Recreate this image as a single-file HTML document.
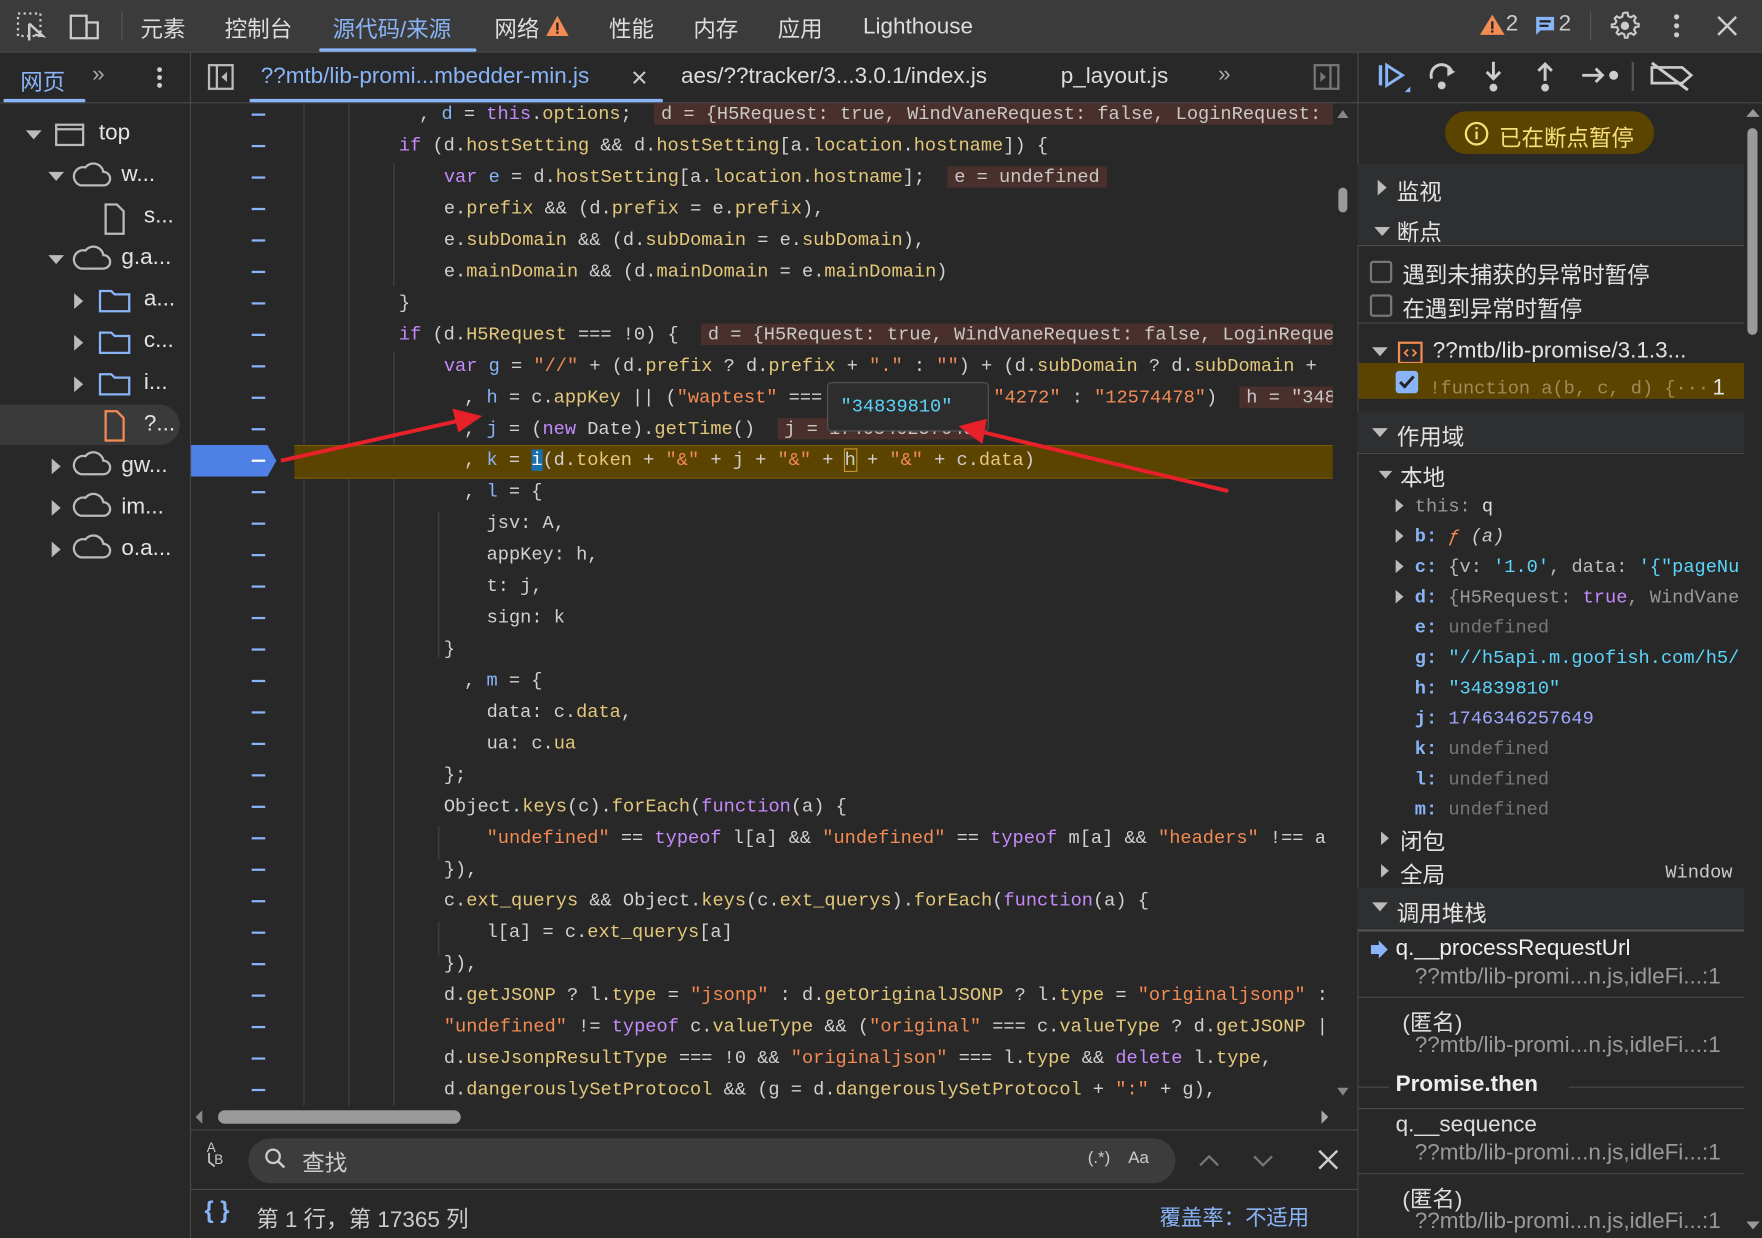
<!DOCTYPE html>
<html><head><meta charset="utf-8">
<style>
html,body{margin:0;padding:0;background:#282828;overflow:hidden;width:1762px;height:1238px}
#w{position:absolute;left:0;top:0;width:1568px;height:1102px;transform:scale(1.12372);transform-origin:0 0;background:#282828;font-family:"Liberation Sans","Noto Sans CJK SC",sans-serif;color:#e3e3e3;overflow:hidden}
.a{position:absolute}
.t{font-size:20px;white-space:nowrap}
.code{position:absolute;font-family:"Liberation Mono","Noto Sans CJK SC",monospace;font-size:16.6px;line-height:28px;white-space:pre;color:#d0d0d0}
.k{color:#c58af9}.p{color:#e3c77a}.s{color:#f28b54}.v{color:#8ab4f8}
.box{background:#4a302c;color:#c8c8c8;padding:0 6px}
.dash{position:absolute;left:224px;width:12px;height:1.5px;background:#8ab4f8}
.guide{position:absolute;width:1px;background:#444}
.hdr{position:absolute;left:1208px;width:344px;height:36px;background:#2e2f31}
.mono{font-family:"Liberation Mono","Noto Sans CJK SC",monospace;font-size:16.6px;white-space:nowrap}
</style></head><body><div id="w">

<!-- top bar -->
<div class="a" style="left:0;top:0;width:1568px;height:46px;background:#3b3b3b;border-bottom:1px solid #4a4a4a"></div>
<svg class="a" style="left:14px;top:10px" width="28" height="28" viewBox="0 0 28 28"><rect x="2" y="2" width="20" height="20" fill="none" stroke="#ccc" stroke-width="2" stroke-dasharray="2 3"/><path d="M12 11 L12 26 M12 11 L24 22 L17 21" stroke="#ccc" stroke-width="2.2" fill="none"/></svg>
<svg class="a" style="left:60px;top:12px" width="32" height="24"><rect x="3" y="2" width="14" height="20" fill="none" stroke="#ccc" stroke-width="2"/><rect x="17" y="8" width="10" height="14" fill="none" stroke="#ccc" stroke-width="2"/></svg>
<div class="a" style="left:108px;top:10px;width:1px;height:26px;background:#555"></div>
<div class="a t" style="left:125px;top:10px;color:#ddd">元素</div>
<div class="a t" style="left:200px;top:10px;color:#ddd">控制台</div>
<div class="a t" style="left:296px;top:10px;color:#8ab4f8">源代码/来源</div>
<div class="a" style="left:284px;top:43px;width:140px;height:3px;background:#8ab4f8;border-radius:2px"></div>
<div class="a t" style="left:440px;top:10px;color:#ddd">网络</div>
<svg class="a" style="left:485px;top:13px" width="22" height="20"><path d="M11 1 L21 19 L1 19Z" fill="#f28b54"/><rect x="10" y="7" width="2" height="7" fill="#222"/><rect x="10" y="15" width="2" height="2" fill="#222"/></svg>
<div class="a t" style="left:542px;top:10px;color:#ddd">性能</div>
<div class="a t" style="left:617px;top:10px;color:#ddd">内存</div>
<div class="a t" style="left:692px;top:10px;color:#ddd">应用</div>
<div class="a t" style="left:768px;top:13px;color:#ddd">Lighthouse</div>
<svg class="a" style="left:1316px;top:12px" width="24" height="20"><path d="M12 1 L23 19 L1 19Z" fill="#f28b54"/><rect x="11" y="7" width="2" height="7" fill="#222"/><rect x="11" y="15" width="2" height="2" fill="#222"/></svg>
<div class="a t" style="left:1340px;top:10px;color:#ccc">2</div>
<svg class="a" style="left:1365px;top:13px" width="20" height="20"><path d="M2 2 H18 V14 H6 L2 18Z" fill="#8ab4f8"/><rect x="5" y="5" width="10" height="2" fill="#222"/><rect x="5" y="9" width="8" height="2" fill="#222"/></svg>
<div class="a t" style="left:1387px;top:10px;color:#ccc">2</div>
<div class="a" style="left:1415px;top:10px;width:1px;height:26px;background:#555"></div>
<svg class="a" style="left:1432px;top:9px" width="28" height="28" viewBox="0 0 24 24"><path d="M12 2 l2 0 .5 2.5 2 1 2.3-1.3 1.5 1.5-1.3 2.3 1 2 2.5.5v2l-2.5.5-1 2 1.3 2.3-1.5 1.5-2.3-1.3-2 1-.5 2.5h-2l-.5-2.5-2-1-2.3 1.3-1.5-1.5 1.3-2.3-1-2L2 13v-2l2.5-.5 1-2L4.2 6.2l1.5-1.5L8 6l2-1 .5-2.5Z" fill="none" stroke="#ccc" stroke-width="1.6"/><circle cx="12" cy="12" r="3.2" fill="#ccc"/></svg>
<svg class="a" style="left:1484px;top:10px" width="16" height="26"><circle cx="8" cy="5" r="2.3" fill="#ccc"/><circle cx="8" cy="13" r="2.3" fill="#ccc"/><circle cx="8" cy="21" r="2.3" fill="#ccc"/></svg>
<svg class="a" style="left:1526px;top:12px" width="22" height="22"><path d="M3 3 L19 19 M19 3 L3 19" stroke="#ccc" stroke-width="2.2"/></svg>

<!-- second row -->
<div class="a" style="left:0;top:47px;width:1568px;height:44px;background:#282828;border-bottom:1px solid #4a4a4a"></div>
<div class="a" style="left:169px;top:47px;width:1px;height:1055px;background:#4a4a4a"></div>
<div class="a" style="left:1208px;top:47px;width:1px;height:1055px;background:#4a4a4a"></div>
<div class="a t" style="left:18px;top:57px;color:#8ab4f8">网页</div>
<div class="a" style="left:3px;top:88px;width:73px;height:3px;background:#8ab4f8;border-radius:2px"></div>
<div class="a t" style="left:82px;top:55px;color:#aaa">&raquo;</div>
<svg class="a" style="left:136px;top:58px" width="12" height="24"><circle cx="6" cy="4" r="2.2" fill="#ccc"/><circle cx="6" cy="11" r="2.2" fill="#ccc"/><circle cx="6" cy="18" r="2.2" fill="#ccc"/></svg>
<svg class="a" style="left:184px;top:56px" width="26" height="26"><rect x="2" y="2" width="21" height="21" fill="none" stroke="#bbb" stroke-width="2"/><path d="M9 2 V23" stroke="#bbb" stroke-width="2"/><path d="M18 8 L13 12.5 L18 17Z" fill="#bbb"/></svg>
<div class="a t" style="left:232px;top:57px;color:#8ab4f8">??mtb/lib-promi...mbedder-min.js</div>
<svg class="a" style="left:562px;top:62px" width="14" height="14"><path d="M2 2 L12 12 M12 2 L2 12" stroke="#ccc" stroke-width="1.8"/></svg>
<div class="a" style="left:222px;top:88px;width:368px;height:3px;background:#8ab4f8;border-radius:2px"></div>
<div class="a t" style="left:606px;top:57px;color:#ddd">aes/??tracker/3...3.0.1/index.js</div>
<div class="a t" style="left:944px;top:57px;color:#ddd">p_layout.js</div>
<div class="a t" style="left:1084px;top:55px;color:#aaa">&raquo;</div>
<svg class="a" style="left:1168px;top:56px" width="26" height="26"><rect x="2" y="2" width="21" height="21" fill="none" stroke="#777" stroke-width="2"/><path d="M16 2 V23" stroke="#777" stroke-width="2"/><path d="M7 8 L12 12.5 L7 17Z" fill="#777"/></svg>
<!-- debugger toolbar -->
<svg class="a" style="left:1222px;top:52px" width="290" height="36">
<rect x="5" y="6" width="3" height="18" fill="#8ab4f8"/><path d="M12 6 L26 15 L12 24Z" fill="none" stroke="#8ab4f8" stroke-width="2.6"/><path d="M28 30 L33 25 L33 30Z" fill="#8ab4f8"/>
<path d="M52 18 A9 9 0 0 1 70 12" fill="none" stroke="#ccc" stroke-width="2.6"/><path d="M66 8 L73 12 L66 16Z" fill="#ccc"/><circle cx="61" cy="24" r="3.5" fill="#ccc"/>
<path d="M107 3 V18 M101 12 L107 18 L113 12" stroke="#ccc" stroke-width="2.6" fill="none"/><circle cx="107" cy="26" r="3.5" fill="#ccc"/>
<path d="M153 20 V5 M147 11 L153 5 L159 11" stroke="#ccc" stroke-width="2.6" fill="none"/><circle cx="153" cy="26" r="3.5" fill="#ccc"/>
<path d="M186 15 H204 M198 9 L204 15 L198 21" stroke="#ccc" stroke-width="2.6" fill="none"/><circle cx="214" cy="15" r="4" fill="#ccc"/>
<rect x="230" y="3" width="2" height="26" fill="#555"/>
<path d="M248 8 H275 L283 15 L275 22 H248Z" fill="none" stroke="#ccc" stroke-width="2.4"/><path d="M248 4 L280 28" stroke="#ccc" stroke-width="2.6"/>
</svg>

<!-- left tree -->
<div class="a" style="left:0;top:360px;width:160px;height:36px;background:#3a3a3a;border-radius:0 18px 18px 0"></div>
<svg class="a" style="left:0;top:92px" width="168" height="420" fill="none" stroke="#bbb" stroke-width="2">
<path d="M23 24 L37 24 L30 32Z" fill="#bbb" stroke="none"/><rect x="50" y="19" width="24" height="18"/><path d="M50 23 H74"/>
<path d="M43 61 L57 61 L50 69Z" fill="#bbb" stroke="none"/><path d="M72 73 H92 A6 6 0 0 0 92 61 A9 9 0 0 0 76 57 A7 7 0 0 0 72 73Z"/>
<path d="M94 90 H104 L110 96 V116 H94Z"/>
<path d="M43 135 L57 135 L50 143Z" fill="#bbb" stroke="none"/><path d="M72 147 H92 A6 6 0 0 0 92 135 A9 9 0 0 0 76 131 A7 7 0 0 0 72 147Z"/>
<path d="M66 169 L66 183 L74 176Z" fill="#bbb" stroke="none"/><path d="M89 167 H99 L102 170 H115 V185 H89Z" stroke="#8ab4f8"/>
<path d="M66 206 L66 220 L74 213Z" fill="#bbb" stroke="none"/><path d="M89 204 H99 L102 207 H115 V222 H89Z" stroke="#8ab4f8"/>
<path d="M66 243 L66 257 L74 250Z" fill="#bbb" stroke="none"/><path d="M89 241 H99 L102 244 H115 V259 H89Z" stroke="#8ab4f8"/>
<path d="M94 274 H104 L110 280 V300 H94Z" stroke="#f28b54"/>
<path d="M46 316 L46 330 L54 323Z" fill="#bbb" stroke="none"/><path d="M72 330 H92 A6 6 0 0 0 92 318 A9 9 0 0 0 76 314 A7 7 0 0 0 72 330Z"/>
<path d="M46 353 L46 367 L54 360Z" fill="#bbb" stroke="none"/><path d="M72 367 H92 A6 6 0 0 0 92 355 A9 9 0 0 0 76 351 A7 7 0 0 0 72 367Z"/>
<path d="M46 390 L46 404 L54 397Z" fill="#bbb" stroke="none"/><path d="M72 404 H92 A6 6 0 0 0 92 392 A9 9 0 0 0 76 388 A7 7 0 0 0 72 404Z"/>
</svg>
<div class="a t" style="left:88px;top:107px">top</div>
<div class="a t" style="left:108px;top:144px">w...</div>
<div class="a t" style="left:128px;top:181px">s...</div>
<div class="a t" style="left:108px;top:218px">g.a...</div>
<div class="a t" style="left:128px;top:255px">a...</div>
<div class="a t" style="left:128px;top:292px">c...</div>
<div class="a t" style="left:128px;top:329px">i...</div>
<div class="a t" style="left:128px;top:366px">?...</div>
<div class="a t" style="left:108px;top:403px">gw...</div>
<div class="a t" style="left:108px;top:440px">im...</div>
<div class="a t" style="left:108px;top:477px">o.a...</div>

<!-- code area -->
<div class="guide" style="left:270px;top:92px;height:892px"></div>
<div class="guide" style="left:310px;top:92px;height:892px"></div>
<div class="guide" style="left:350px;top:145px;height:110px"></div>
<div class="guide" style="left:350px;top:313px;height:671px"></div>
<div class="guide" style="left:390px;top:455px;height:130px"></div>
<div class="guide" style="left:390px;top:735px;height:30px"></div>
<div class="guide" style="left:390px;top:820px;height:30px"></div>
<div class="a" style="left:262px;top:396px;width:924px;height:28px;background:#5b4300;border-top:1px solid #7a5a00;border-bottom:1px solid #7a5a00"></div>
<svg class="a" style="left:170px;top:396px" width="80" height="29"><path d="M0 0 H68 L76 14 L68 28 H0Z" fill="#4e80e6"/></svg>
<div class="dash" style="top:101px"></div><div class="dash" style="top:129px"></div><div class="dash" style="top:157px"></div><div class="dash" style="top:185px"></div><div class="dash" style="top:213px"></div><div class="dash" style="top:241px"></div><div class="dash" style="top:269px"></div><div class="dash" style="top:297px"></div><div class="dash" style="top:325px"></div><div class="dash" style="top:353px"></div><div class="dash" style="top:381px"></div><div class="dash" style="top:409px;background:#fff"></div><div class="dash" style="top:437px"></div><div class="dash" style="top:465px"></div><div class="dash" style="top:493px"></div><div class="dash" style="top:521px"></div><div class="dash" style="top:549px"></div><div class="dash" style="top:577px"></div><div class="dash" style="top:605px"></div><div class="dash" style="top:633px"></div><div class="dash" style="top:661px"></div><div class="dash" style="top:689px"></div><div class="dash" style="top:717px"></div><div class="dash" style="top:745px"></div><div class="dash" style="top:773px"></div><div class="dash" style="top:801px"></div><div class="dash" style="top:829px"></div><div class="dash" style="top:857px"></div><div class="dash" style="top:885px"></div><div class="dash" style="top:913px"></div><div class="dash" style="top:941px"></div><div class="dash" style="top:969px"></div>

<div class="a" style="left:250px;top:88px;width:936px;height:896px;overflow:hidden">
<div class="code" style="left:123px;top:0">, <span class="v">d</span> = <span class="k">this</span>.<span class="p">options</span>;  <span class="box">d = {H5Request: true, WindVaneRequest: false, LoginRequest: </span></div>
<div class="code" style="left:105px;top:28px"><span class="k">if</span> (d.<span class="p">hostSetting</span> &amp;&amp; d.<span class="p">hostSetting</span>[a.<span class="p">location</span>.<span class="p">hostname</span>]) {</div>
<div class="code" style="left:145px;top:56px"><span class="k">var</span> <span class="v">e</span> = d.<span class="p">hostSetting</span>[a.<span class="p">location</span>.<span class="p">hostname</span>];  <span class="box">e = undefined</span></div>
<div class="code" style="left:145px;top:84px">e.<span class="p">prefix</span> &amp;&amp; (d.<span class="p">prefix</span> = e.<span class="p">prefix</span>),</div>
<div class="code" style="left:145px;top:112px">e.<span class="p">subDomain</span> &amp;&amp; (d.<span class="p">subDomain</span> = e.<span class="p">subDomain</span>),</div>
<div class="code" style="left:145px;top:140px">e.<span class="p">mainDomain</span> &amp;&amp; (d.<span class="p">mainDomain</span> = e.<span class="p">mainDomain</span>)</div>
<div class="code" style="left:105px;top:168px">}</div>
<div class="code" style="left:105px;top:196px"><span class="k">if</span> (d.<span class="p">H5Request</span> === !0) {  <span class="box">d = {H5Request: true, WindVaneRequest: false, LoginReque</span></div>
<div class="code" style="left:145px;top:224px"><span class="k">var</span> <span class="v">g</span> = <span class="s">"//"</span> + (d.<span class="p">prefix</span> ? d.<span class="p">prefix</span> + <span class="s">"."</span> : <span class="s">""</span>) + (d.<span class="p">subDomain</span> ? d.<span class="p">subDomain</span> + </div>
<div class="code" style="left:163px;top:252px">, <span class="v">h</span> = c.<span class="p">appKey</span> || (<span class="s">"waptest"</span> === </div>
<div class="code" style="left:634px;top:252px"><span class="s">"4272"</span> : <span class="s">"12574478"</span>)  <span class="box">h = "348</span></div>
<div class="code" style="left:163px;top:280px">, <span class="v">j</span> = (<span class="k">new</span> Date).<span class="p">getTime</span>()  <span class="box">j = 1746346257649</span></div>
<div class="code" style="left:163px;top:308px">, <span class="v">k</span> = <span style="background:#1a6fb0;color:#fff">i</span>(d.<span class="p">token</span> + <span class="s">"&amp;"</span> + j + <span class="s">"&amp;"</span> + <span style="outline:1px solid #c99a2e">h</span> + <span class="s">"&amp;"</span> + c.<span class="p">data</span>)</div>
<div class="code" style="left:163px;top:336px">, <span class="v">l</span> = {</div>
<div class="code" style="left:183px;top:364px">jsv: A,</div>
<div class="code" style="left:183px;top:392px">appKey: h,</div>
<div class="code" style="left:183px;top:420px">t: j,</div>
<div class="code" style="left:183px;top:448px">sign: k</div>
<div class="code" style="left:145px;top:476px">}</div>
<div class="code" style="left:163px;top:504px">, <span class="v">m</span> = {</div>
<div class="code" style="left:183px;top:532px">data: c.<span class="p">data</span>,</div>
<div class="code" style="left:183px;top:560px">ua: c.<span class="p">ua</span></div>
<div class="code" style="left:145px;top:588px">};</div>
<div class="code" style="left:145px;top:616px">Object.<span class="p">keys</span>(c).<span class="p">forEach</span>(<span class="k">function</span>(a) {</div>
<div class="code" style="left:183px;top:644px"><span class="s">"undefined"</span> == <span class="k">typeof</span> l[a] &amp;&amp; <span class="s">"undefined"</span> == <span class="k">typeof</span> m[a] &amp;&amp; <span class="s">"headers"</span> !== a</div>
<div class="code" style="left:145px;top:672px">}),</div>
<div class="code" style="left:145px;top:700px">c.<span class="p">ext_querys</span> &amp;&amp; Object.<span class="p">keys</span>(c.<span class="p">ext_querys</span>).<span class="p">forEach</span>(<span class="k">function</span>(a) {</div>
<div class="code" style="left:183px;top:728px">l[a] = c.<span class="p">ext_querys</span>[a]</div>
<div class="code" style="left:145px;top:756px">}),</div>
<div class="code" style="left:145px;top:784px">d.<span class="p">getJSONP</span> ? l.<span class="p">type</span> = <span class="s">"jsonp"</span> : d.<span class="p">getOriginalJSONP</span> ? l.<span class="p">type</span> = <span class="s">"originaljsonp"</span> :</div>
<div class="code" style="left:145px;top:812px"><span class="s">"undefined"</span> != <span class="k">typeof</span> c.<span class="p">valueType</span> &amp;&amp; (<span class="s">"original"</span> === c.<span class="p">valueType</span> ? d.<span class="p">getJSONP</span> |</div>
<div class="code" style="left:145px;top:840px">d.<span class="p">useJsonpResultType</span> === !0 &amp;&amp; <span class="s">"originaljson"</span> === l.<span class="p">type</span> &amp;&amp; <span class="k">delete</span> l.<span class="p">type</span>,</div>
<div class="code" style="left:145px;top:868px">d.<span class="p">dangerouslySetProtocol</span> &amp;&amp; (g = d.<span class="p">dangerouslySetProtocol</span> + <span class="s">":"</span> + g),</div>
</div>
<!-- tooltip -->
<div class="a" style="left:736px;top:340px;width:142px;height:42px;background:#2d2d2d;border:1px solid #555;border-radius:4px"></div>
<div class="code" style="left:748px;top:348px;color:#5cd5fb">"34839810"</div>
<!-- arrows -->
<svg class="a" style="left:0;top:0" width="1208" height="600"><g stroke="#e8202a" stroke-width="3.5" fill="#e8202a"><path d="M250 410 L410 374"/><path d="M425 371 L405 366 L409 382Z"/><path d="M1093 437 L872 384"/><path d="M857 380 L876 375 L873 392Z"/></g></svg>
<!-- code scrollbars -->
<svg class="a" style="left:1188px;top:95px" width="14" height="885"><path d="M2 10 L7 3 L12 10Z" fill="#888"/><rect x="3" y="72" width="8" height="22" rx="4" fill="#9a9a9a"/><path d="M2 873 L7 880 L12 873Z" fill="#888"/></svg>
<svg class="a" style="left:172px;top:986px" width="1016" height="16"><path d="M2 8 L8 2 L8 14Z" fill="#888"/><rect x="22" y="2" width="216" height="12" rx="6" fill="#9a9a9a"/><path d="M1010 8 L1004 2 L1004 14Z" fill="#aaa"/></svg>
<div class="a" style="left:170px;top:1005px;width:1038px;height:1px;background:#4a4a4a"></div>
<!-- search bar -->
<div class="a" style="left:184px;top:1016px;font-size:12px;color:#ccc;line-height:11px">A<br>&nbsp;&nbsp;B</div>
<svg class="a" style="left:184px;top:1024px" width="10" height="20"><path d="M2 2 V10 L7 14" stroke="#ccc" fill="none" stroke-width="1.5"/></svg>
<div class="a" style="left:221px;top:1013px;width:825px;height:40px;border-radius:20px;background:#3c3c3c"></div>
<svg class="a" style="left:234px;top:1020px" width="24" height="24"><circle cx="9" cy="9" r="6" stroke="#ccc" stroke-width="2" fill="none"/><path d="M13 13 L19 19" stroke="#ccc" stroke-width="2.2"/></svg>
<div class="a t" style="left:269px;top:1019px;color:#ccc">查找</div>
<div class="a" style="left:968px;top:1022px;font-size:15px;color:#ccc">(.*)</div>
<div class="a" style="left:1004px;top:1022px;font-size:15px;color:#ccc">Aa</div>
<svg class="a" style="left:1064px;top:1022px" width="130" height="20"><path d="M4 15 L12 7 L20 15 M52 7 L60 15 L68 7" stroke="#777" stroke-width="2" fill="none"/><path d="M110 2 L126 18 M126 2 L110 18" stroke="#ccc" stroke-width="2.2"/></svg>
<div class="a" style="left:170px;top:1058px;width:1038px;height:1px;background:#4a4a4a"></div>
<div class="a" style="left:182px;top:1066px;font-size:21px;color:#8ab4f8;font-weight:bold">{ }</div>
<div class="a t" style="left:228px;top:1069px;color:#ccc">第 1 行，第 17365 列</div>
<div class="a t" style="left:1032px;top:1069px;color:#8ab4f8;font-size:19px">覆盖率：不适用</div>

<!-- right panel -->
<div class="a" style="left:1209px;top:92px;width:343px;height:1010px;background:#282828"></div>
<div class="a" style="left:1286px;top:99px;width:186px;height:38px;border-radius:19px;background:#5b4300"></div>
<svg class="a" style="left:1302px;top:107px" width="24" height="24"><circle cx="12" cy="12" r="9.5" stroke="#f5e07a" stroke-width="2" fill="none"/><rect x="11" y="10" width="2" height="7" fill="#f5e07a"/><rect x="11" y="6" width="2" height="2" fill="#f5e07a"/></svg>
<div class="a t" style="left:1334px;top:107px;color:#f5e07a">已在断点暂停</div>
<div class="hdr" style="top:146px;height:72px"></div>
<svg class="a" style="left:1222px;top:158px" width="18" height="60"><path d="M4 2 L4 16 L12 9Z M1 44 L15 44 L8 52Z" fill="#bbb"/></svg>
<div class="a t" style="left:1243px;top:155px">监视</div>
<div class="a t" style="left:1243px;top:191px">断点</div>
<div class="a" style="left:1209px;top:218px;width:343px;height:1px;background:#4a4a4a"></div>
<div class="a" style="left:1219px;top:232px;width:16px;height:16px;border:2px solid #777;border-radius:3px"></div>
<div class="a t" style="left:1248px;top:229px">遇到未捕获的异常时暂停</div>
<div class="a" style="left:1219px;top:262px;width:16px;height:16px;border:2px solid #777;border-radius:3px"></div>
<div class="a t" style="left:1248px;top:259px">在遇到异常时暂停</div>
<div class="a" style="left:1209px;top:287px;width:343px;height:1px;background:#4a4a4a"></div>
<svg class="a" style="left:1220px;top:303px" width="50" height="24"><path d="M1 6 L15 6 L8 14Z" fill="#bbb"/><rect x="25" y="2" width="20" height="18" fill="none" stroke="#f28b54" stroke-width="2"/><path d="M33 8 L30 11 L33 14 M37 8 L40 11 L37 14" stroke="#f28b54" stroke-width="1.6" fill="none"/></svg>
<div class="a t" style="left:1275px;top:301px">??mtb/lib-promise/3.1.3...</div>
<div class="a" style="left:1209px;top:323px;width:343px;height:32px;background:#5b4300"></div>
<svg class="a" style="left:1241px;top:329px" width="22" height="22"><rect x="1" y="1" width="20" height="20" rx="3" fill="#8ab4f8"/><path d="M5 11 L9 15 L17 6" stroke="#222" stroke-width="2.6" fill="none"/></svg>
<div class="a mono" style="left:1272px;top:336px;color:#a08a5a">!function a(b, c, d) {···</div>
<div class="a t" style="left:1524px;top:334px">1</div>
<div class="hdr" style="top:366px;height:36px"></div>
<svg class="a" style="left:1220px;top:380px" width="18" height="12"><path d="M1 1 L15 1 L8 9Z" fill="#bbb"/></svg>
<div class="a t" style="left:1243px;top:373px">作用域</div>
<div class="a" style="left:1209px;top:403px;width:343px;height:1px;background:#4a4a4a"></div>
<svg class="a" style="left:1226px;top:418px" width="14" height="10"><path d="M1 1 L13 1 L7 8Z" fill="#bbb"/></svg>
<div class="a t" style="left:1246px;top:409px">本地</div>
<svg class="a" style="left:1240px;top:442px" width="12" height="110"><path d="M2 2 L2 14 L9 8Z M2 29 L2 41 L9 35Z M2 56 L2 68 L9 62Z M2 83 L2 95 L9 89Z" fill="#bbb"/></svg>
<div class="a mono" style="left:1259px;top:441px;color:#999">this: <span style="color:#ddd">q</span></div>
<div class="a mono" style="left:1259px;top:468px;color:#8ab4f8;font-weight:bold">b: <span style="color:#f28b54;font-style:italic;font-weight:normal">ƒ</span> <span style="color:#ccc;font-style:italic;font-weight:normal">(a)</span></div>
<div class="a mono" style="left:1259px;top:495px;color:#8ab4f8;font-weight:bold">c: <span style="color:#bbb;font-weight:normal">{v: <span style="color:#5cd5fb">'1.0'</span>, data: <span style="color:#5cd5fb">'{"pageNu</span></span></div>
<div class="a mono" style="left:1259px;top:522px;color:#8ab4f8;font-weight:bold">d: <span style="color:#999;font-weight:normal">{H5Request: <span style="color:#c58af9">true</span>, WindVane</span></div>
<div class="a mono" style="left:1259px;top:549px;color:#8ab4f8;font-weight:bold">e: <span style="color:#777;font-weight:normal">undefined</span></div>
<div class="a mono" style="left:1259px;top:576px;color:#8ab4f8;font-weight:bold">g: <span style="color:#5cd5fb;font-weight:normal">"//h5api.m.goofish.com/h5/</span></div>
<div class="a mono" style="left:1259px;top:603px;color:#8ab4f8;font-weight:bold">h: <span style="color:#5cd5fb;font-weight:normal">"34839810"</span></div>
<div class="a mono" style="left:1259px;top:630px;color:#8ab4f8;font-weight:bold">j: <span style="color:#a0a6ff;font-weight:normal">1746346257649</span></div>
<div class="a mono" style="left:1259px;top:657px;color:#8ab4f8;font-weight:bold">k: <span style="color:#777;font-weight:normal">undefined</span></div>
<div class="a mono" style="left:1259px;top:684px;color:#8ab4f8;font-weight:bold">l: <span style="color:#777;font-weight:normal">undefined</span></div>
<div class="a mono" style="left:1259px;top:711px;color:#8ab4f8;font-weight:bold">m: <span style="color:#777;font-weight:normal">undefined</span></div>
<svg class="a" style="left:1227px;top:738px" width="12" height="44"><path d="M2 2 L2 14 L9 8Z M2 31 L2 43 L9 37Z" fill="#bbb"/></svg>
<div class="a t" style="left:1246px;top:733px">闭包</div>
<div class="a t" style="left:1246px;top:763px">全局</div>
<div class="a mono" style="left:1482px;top:767px;color:#ccc">Window</div>
<div class="hdr" style="top:790px;height:36px"></div>
<svg class="a" style="left:1220px;top:802px" width="18" height="12"><path d="M1 1 L15 1 L8 9Z" fill="#bbb"/></svg>
<div class="a t" style="left:1243px;top:797px">调用堆栈</div>
<div class="a" style="left:1209px;top:827px;width:343px;height:2px;background:#555"></div>
<svg class="a" style="left:1218px;top:836px" width="20" height="18"><path d="M2 5 H9 V1 L17 9 L9 17 V13 H2Z" fill="#8ab4f8"/></svg>
<div class="a t" style="left:1242px;top:833px;color:#eee">q.__processRequestUrl</div>
<div class="a t" style="left:1259px;top:858px;color:#999">??mtb/lib-promi...n.js,idleFi...:1</div>
<div class="a" style="left:1209px;top:887px;width:343px;height:1px;background:#4a4a4a"></div>
<div class="a t" style="left:1248px;top:894px;color:#ddd">(匿名)</div>
<div class="a t" style="left:1259px;top:919px;color:#999">??mtb/lib-promi...n.js,idleFi...:1</div>
<div class="a" style="left:1209px;top:967px;width:27px;height:1px;background:#4a4a4a"></div>
<div class="a t" style="left:1242px;top:954px;font-weight:bold;color:#eee">Promise.then</div>
<div class="a" style="left:1396px;top:967px;width:156px;height:1px;background:#4a4a4a"></div>
<div class="a" style="left:1209px;top:986px;width:343px;height:1px;background:#4a4a4a"></div>
<div class="a t" style="left:1242px;top:990px;color:#ddd">q.__sequence</div>
<div class="a t" style="left:1259px;top:1015px;color:#999">??mtb/lib-promi...n.js,idleFi...:1</div>
<div class="a" style="left:1209px;top:1044px;width:343px;height:1px;background:#4a4a4a"></div>
<div class="a t" style="left:1248px;top:1051px;color:#ddd">(匿名)</div>
<div class="a t" style="left:1259px;top:1076px;color:#999">??mtb/lib-promi...n.js,idleFi...:1</div>
<!-- right scrollbar -->
<svg class="a" style="left:1552px;top:92px" width="16" height="1010"><path d="M2 12 L8 5 L14 12Z" fill="#999"/><rect x="3" y="22" width="9" height="184" rx="4.5" fill="#9a9a9a"/><path d="M2 995 L8 1002 L14 995Z" fill="#999"/></svg>
</div></body></html>
